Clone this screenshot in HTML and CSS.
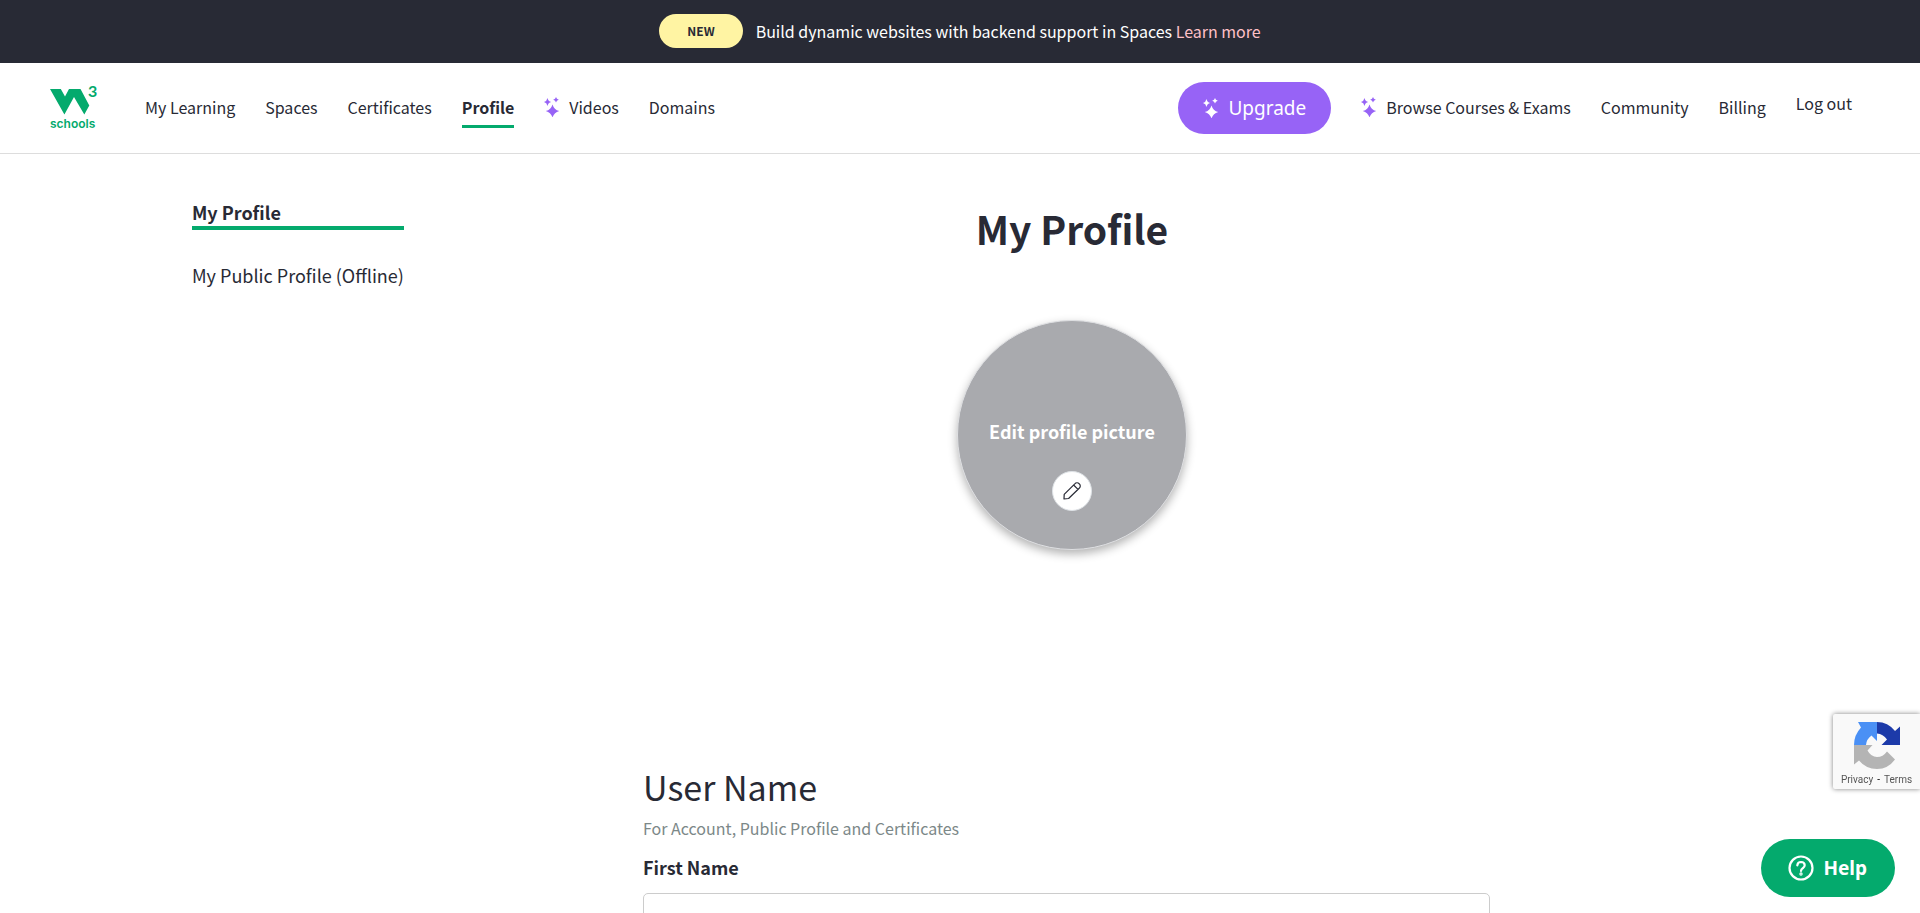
FILE: index.html
```
<!DOCTYPE html>
<html lang="en">
<head>
<meta charset="utf-8">
<title>My Profile</title>
<link rel="stylesheet" href="styles.css">
</head>
<body>
<svg width="0" height="0" class="defs" aria-hidden="true">
  <symbol id="sparkles" viewBox="0 0 16 20">
    <path d="M3.500 1Q4.200 4.300 7.200 5Q4.200 5.700 3.500 9Q2.800 5.700 -.2 5Q2.800 4.300 3.500 1Z"/>
    <path d="M12 0Q12.500 2.200 14.800 2.700Q12.500 3.200 12 5.500Q11.500 3.200 9.200 2.700Q11.500 2.200 12 0Z"/>
    <path d="M8.500 7.400Q10 12.500 15.200 14Q10 15.500 8.500 20.500Q7 15.500 1.800 14Q7 12.500 8.500 7.400Z"/>
  </symbol>
</svg>

<div class="banner">
  <span class="badge">NEW</span>
  <span>Build dynamic websites with backend support in Spaces <a href="#" class="banner-link">Learn more</a></span>
</div>

<header class="header">
  <a href="#" class="logo" aria-label="W3Schools">
    <svg viewBox="0 -6 48 58" width="48" height="58">
      <path d="M0 4H10.800L15 11.500L19 4H30.500L39.300 20.500L34.300 29.500L24 12L14.400 29.600Z"/>
      <text x="38" y="12" class="logo-three">3</text>
      <text x="0" y="43" class="logo-word">schools</text>
    </svg>
  </a>
  <nav class="nav">
    <a href="#">My Learning</a>
    <a href="#">Spaces</a>
    <a href="#">Certificates</a>
    <a href="#" class="current">Profile</a>
    <a href="#" class="with-icon"><svg class="spark"><use href="#sparkles"/></svg>Videos</a>
    <a href="#">Domains</a>
  </nav>
  <nav class="nav nav-end">
    <a href="#" class="upgrade"><svg class="spark"><use href="#sparkles"/></svg>Upgrade</a>
    <a href="#" class="with-icon"><svg class="spark"><use href="#sparkles"/></svg>Browse Courses &amp; Exams</a>
    <a href="#">Community</a>
    <a href="#">Billing</a>
    <button type="button" class="logout">Log out</button>
  </nav>
</header>

<div class="page">
  <aside class="side">
    <a href="#" class="side-current">My Profile</a>
    <a href="#">My Public Profile (Offline)</a>
  </aside>
  <main class="main">
    <h1>My Profile</h1>
    <button type="button" class="avatar">
      <span>Edit profile picture</span>
      <span class="pencil">
        <svg viewBox="0 0 18 18" width="18" height="18"><path d="M1 17L1.200 12.400L11.800 1.800A2.800 2.800 0 0 1 16.200 1.800A2.800 2.800 0 0 1 16.200 6.200L5.600 16.500Z M10.600 3L15 7.400"/></svg>
      </span>
    </button>
    <form class="form">
      <h2>User Name</h2>
      <p>For Account, Public Profile and Certificates</p>
      <label for="first">First Name</label>
      <input id="first" type="text">
    </form>
  </main>
</div>

<div class="captcha">
  <svg viewBox="0 0 46 47" width="46" height="47">
    <path fill="#4a90f5" d="M23 0V19L17.500 13.500Q12.500 17 12 23H0Q0 13 7 5.500L4 0Z"/>
    <path fill="#1c3aa9" d="M23 0Q34 0 41 9L46 4.500V23H27.500L33 17.500Q29 12 23 11.500Z"/>
    <path fill="#b4b4b4" d="M0 23H18.500L13.500 28.500Q17 35 23 35Q29 35 33 29.500L41 37.500Q34 47 23 47Q12 47 5 38.500L0 42.500Z"/>
  </svg>
  <div class="captcha-links"><a href="#">Privacy</a><span class="dash">-</span><a href="#">Terms</a></div>
</div>

<button type="button" class="help">
  <svg viewBox="0 0 26 26" width="26" height="26"><circle cx="13" cy="13" r="11.500"/><path d="M9.300 10.300Q9.600 7 13 7Q16.700 7.200 16.700 10.200Q16.700 12 14.800 13.200Q13 14.400 13 16"/><circle cx="13" cy="19" r=".6"/></svg>
  Help
</button>
</body>
</html>
```
FILE: styles.css
```
* { box-sizing: border-box; }

body {
  margin: 0;
  height: 100vh;
  overflow: hidden;
  background: #fff;
  color: #282a35;
  font: 16px/24px "Noto Sans CJK SC", "Noto Sans", sans-serif;
}

a { color: inherit; text-decoration: none; }
button { font: inherit; color: inherit; border: 0; background: none; padding: 0; cursor: pointer; }
.defs { position: absolute; }

.banner {
  display: flex;
  align-items: center;
  justify-content: center;
  gap: 13px;
  height: 63px;
  padding-bottom: 2px;
  background: #282a35;
  color: #fff;
}
.badge {
  padding: 5px 28px;
  border-radius: 17px;
  background: #fff4a3;
  color: #282a35;
  font-size: 12px;
  font-weight: 700;
}
.banner-link { color: #ffc0c7; }

.header {
  display: flex;
  align-items: center;
  height: 91px;
  padding: 0 68px 0 50px;
  border-bottom: 1px solid #ddd;
}
.logo { display: flex; margin-right: 47px; fill: #04aa6d; }
.logo-three { font: 700 16px Lato, sans-serif; }
.logo-word { font: 600 12px Inter, sans-serif; }

.nav { display: flex; align-items: center; gap: 30px; white-space: nowrap; }
.nav a { padding-bottom: 2px; }
.nav-end { margin-left: auto; }
.nav .current {
  font-weight: 700;
  padding-top: 7px;
  padding-bottom: 6px;
  border-bottom: 3px solid #04aa6d;
}
.with-icon { display: flex; align-items: center; gap: 9px; }
.spark { width: 16px; height: 20px; overflow: visible; fill: #9763f6; }
.nav .upgrade {
  display: flex;
  align-items: center;
  gap: 9px;
  padding: 14px 25px;
  border-radius: 26px;
  background: #9763f6;
  color: #fff;
  font: 19px/24px "Noto Sans", sans-serif;
}
.upgrade .spark { fill: #fff; }
.logout { padding-bottom: 10px; }

.page {
  display: grid;
  grid-template-columns: 451fr 858fr 227fr;
  padding: 0 10%;
}
.side {
  display: flex;
  flex-direction: column;
  justify-self: start;
  gap: 31px;
  padding-top: 44px;
  font-size: 18px;
  line-height: 28px;
}
.side-current { font-weight: 700; border-bottom: 4px solid #04aa6d; }

.main { display: flex; flex-direction: column; align-items: center; padding-top: 44px; }
h1 { margin: 0; font-size: 39px; line-height: 60px; }
.avatar {
  display: flex;
  flex-direction: column;
  align-items: center;
  gap: 26px;
  width: 230px;
  height: 230px;
  margin-top: 62px;
  padding-top: 96px;
  border: 1px solid #dedfe2;
  border-radius: 50%;
  background: #a9aaae;
  box-shadow: 0 4px 10px rgba(0, 0, 0, .3);
  color: #fff;
  font-size: 18px;
  line-height: 28px;
  font-weight: 700;
}
.pencil {
  display: grid;
  place-items: center;
  width: 40px;
  height: 40px;
  border: 1px solid #dee2e6;
  border-radius: 50%;
  background: #fff;
}
.pencil svg { fill: none; stroke: #282a35; stroke-width: 1.2; stroke-linejoin: round; }

.form { width: 100%; margin-top: 211px; padding-right: 11px; }
h2 { margin: 0; font-size: 34px; line-height: 52px; font-weight: 400; }
.form p { margin: 3px 0 13px; color: #7c8888; }
.form label { display: block; font-size: 18px; line-height: 28px; font-weight: 700; }
.form input {
  display: block;
  width: 100%;
  height: 52px;
  margin-top: 12px;
  padding: 0 16px;
  border: 1px solid #ccc;
  border-radius: 5px;
  font: inherit;
}

.captcha {
  position: fixed;
  right: 0;
  bottom: 124px;
  display: flex;
  flex-direction: column;
  align-items: center;
  width: 87px;
  height: 75px;
  padding-top: 8px;
  border-radius: 2px 0 0 2px;
  background: #f9f9f9;
  box-shadow: 0 0 5px gray;
  color: #555;
  font: 10px/12px Roboto, sans-serif;
}
.captcha-links { display: flex; gap: 4px; margin-top: 5px; }
.dash { color: #000; }

.help {
  position: fixed;
  right: 25px;
  bottom: 16px;
  display: flex;
  align-items: center;
  gap: 9px;
  height: 58px;
  padding: 0 28px 0 27px;
  border-radius: 29px;
  background: #04aa6d;
  color: #fff;
  font: 700 19px/24px "Noto Sans", sans-serif;
}
.help svg { fill: none; stroke: #fff; stroke-width: 2.2; stroke-linecap: round; }
```
